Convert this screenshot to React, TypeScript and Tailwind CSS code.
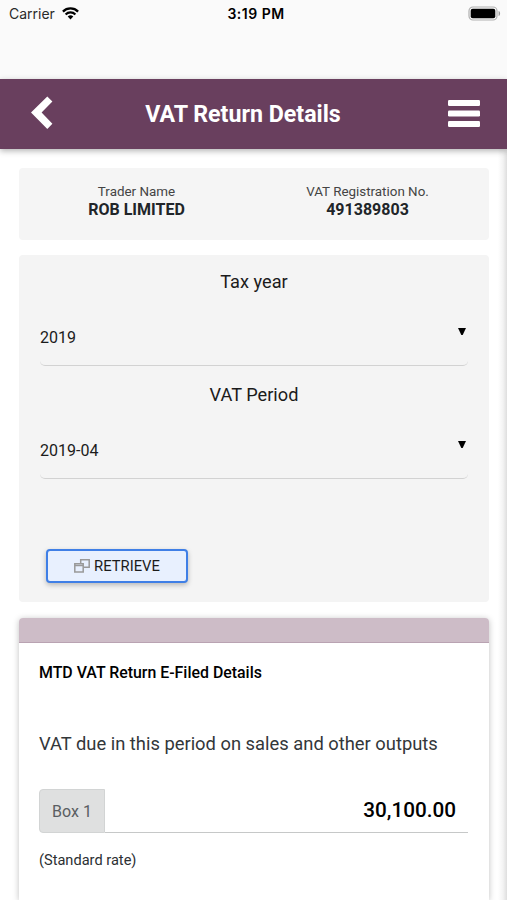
import { useState } from 'react';

interface Trader {
  name: string;
  vrn: string;
}

interface ReturnBox {
  id: number;
  title: string;
  amount: string;
  note: string;
}

const trader: Trader = { name: 'ROB LIMITED', vrn: '491389803' };

const boxes: ReturnBox[] = [
  {
    id: 1,
    title: 'VAT due in this period on sales and other outputs',
    amount: '30,100.00',
    note: '(Standard rate)',
  },
];

function StatusBar() {
  return (
    <div className="h-[79px] bg-[#fafafa] pl-[9px] pr-[6px] font-['Inter',sans-serif] text-black">
      <div className="grid h-[26px] grid-cols-3 items-center">
        <div className="flex items-center gap-[7px]">
          <span className="text-[14px] text-[#2a2a2a]">Carrier</span>
          <svg width="17" height="13" viewBox="0 0 17 13" fill="none" stroke="currentColor">
            <path d="M.9 4.6a10.8 10.8 0 0 1 15.2 0" strokeWidth="2.3" />
            <path d="M3.6 7.4a6.9 6.9 0 0 1 9.8 0" strokeWidth="2.2" />
            <path d="M8.5 12.4 5.7 9.5a4 4 0 0 1 5.6 0z" fill="currentColor" stroke="none" />
          </svg>
        </div>
        <span className="pl-[2px] text-center text-[14px] font-semibold tracking-[0.5px]">3:19 PM</span>
        <svg className="justify-self-end" width="33" height="15" viewBox="0 0 33 15">
          <rect x="1" y="1" width="28" height="13" rx="4" fill="none" stroke="#b0b0b0" strokeWidth="1.2" />
          <rect x="2.7" y="2.8" width="24.6" height="9.4" rx="2" fill="#000" />
          <path d="M30.6 5v5c1-.3 1.5-1.3 1.5-2.5s-.5-2.2-1.5-2.5z" fill="#999" />
        </svg>
      </div>
    </div>
  );
}

function Header() {
  return (
    <header className="z-10 grid h-[70px] grid-cols-[72px_1fr_93px] items-center bg-[#693f5e] text-white shadow-[0_2px_6px_rgba(0,0,0,0.3)]">
      <button aria-label="Back" className="-mt-[3px] ml-[31px]">
        <svg width="22" height="34" viewBox="0 0 22 34" fill="currentColor">
          <path d="M16.3.4 21.4 5.5 10.6 16.6 21.4 27.8 16.3 32.9 0 16.6z" />
        </svg>
      </button>
      <h1 className="text-center text-[23.2px] font-bold">VAT Return Details</h1>
      <button aria-label="Menu" className="mr-[27px] justify-self-end">
        <svg width="32" height="28" viewBox="0 0 32 28" fill="currentColor">
          <rect y="0" width="32" height="6" rx="1.2" />
          <rect y="10.5" width="32" height="6" rx="1.2" />
          <rect y="21" width="32" height="6" rx="1.2" />
        </svg>
      </button>
    </header>
  );
}

function TraderItem({ label, value }: { label: string; value: string }) {
  return (
    <div className="text-center">
      <div className="text-[13.4px] leading-[16px] text-[#444]">{label}</div>
      <div className="text-[16px] font-bold leading-[20px] text-[#212529]">{value}</div>
    </div>
  );
}

function SelectField({ label, value }: { label: string; value: string }) {
  return (
    <div className="h-[113px]">
      <div className="text-center text-[18.2px] leading-[24px] text-[#1b1b1b]">{label}</div>
      <div className="mt-[15px] flex h-[57px] items-center justify-between rounded-[5px] border-b border-[#d2d2d2] text-[16px] text-[#1b1b1b]">
        <span className="pt-[2px]">{value}</span>
        <svg className="mb-[12px] mr-[2px]" width="8" height="7" viewBox="0 0 8 7">
          <path d="M0 0h8L4.7 7H3.3z" fill="#000" />
        </svg>
      </div>
    </div>
  );
}

function BoxRow({ box }: { box: ReturnBox }) {
  return (
    <div>
      <p className="text-[18.35px] leading-[24px] text-[#33373a]">{box.title}</p>
      <div className="mt-[33px] flex h-11">
        <span className="flex w-[66px] items-center justify-center rounded-l border border-[#d2d4d4] bg-[#dfe0e0] pt-px text-[16px] text-[#5a5e62]">
          Box {box.id}
        </span>
        <div className="flex flex-1 items-center justify-end border-b border-[#c6c8c8] pr-3 pt-px text-[20.7px] font-medium text-black">
          {box.amount}
        </div>
      </div>
      <p className="mt-[17px] text-[14.6px] leading-[20px] text-[#2c3033]">{box.note}</p>
    </div>
  );
}

export default function App() {
  const [year] = useState('2019');
  const [period] = useState('2019-04');

  return (
    <div className="flex h-[900px] w-[507px] flex-col overflow-hidden bg-white font-['Roboto',sans-serif]">
      <StatusBar />
      <Header />

      <main className="flex flex-1 flex-col bg-[linear-gradient(to_left,#dedede,#f3f3f3_4px,#fff_9px)] pl-[19px] pr-[18px] pt-[19px]">
        {/* Trader */}
        <section className="grid h-[72px] grid-cols-2 rounded bg-[#f5f5f5] pl-[2px] pr-[6px] pt-[16px]">
          <TraderItem label="Trader Name" value={trader.name} />
          <TraderItem label="VAT Registration No." value={trader.vrn} />
        </section>

        {/* Period picker */}
        <section className="mt-[15px] h-[347px] rounded-sm bg-[#f4f4f4] px-[21px] pt-[15px]">
          <SelectField label="Tax year" value={year} />
          <SelectField label="VAT Period" value={period} />
          <button className="ml-[6px] mt-[53px] flex h-[34px] w-[142px] items-center justify-center gap-1 rounded border-2 border-[#3f7fe6] bg-[#e8f0fe] text-[14.8px] text-[#1b1b1b] shadow-[0_2px_5px_rgba(0,0,0,0.25)]">
            <svg width="16" height="14" viewBox="0 0 16 14" fill="none" stroke="#999" strokeWidth="1.5">
              <path d="M6.7 4.5V.8h8.5v7.4H10" />
              <path d="M.8 4.8h8.4v8.200H.8z" />
              <path d="M.8 6.500h8.400" />
            </svg>
            RETRIEVE
          </button>
        </section>

        {/* Return details */}
        <section className="mt-4 flex-1 rounded-t-sm bg-white shadow-[0_1px_6px_rgba(0,0,0,0.25)]">
          <div className="h-[25px] rounded-t-sm border-b border-[#b9a3b2] bg-[#cdbcc7]" />
          <div className="pl-5 pr-[21px] pt-5">
            <h2 className="mb-[49px] text-[15.9px] font-medium leading-[20px] text-black">MTD VAT Return E-Filed Details</h2>
            {boxes.map((box) => (
              <BoxRow key={box.id} box={box} />
            ))}
          </div>
        </section>
      </main>
    </div>
  );
}
